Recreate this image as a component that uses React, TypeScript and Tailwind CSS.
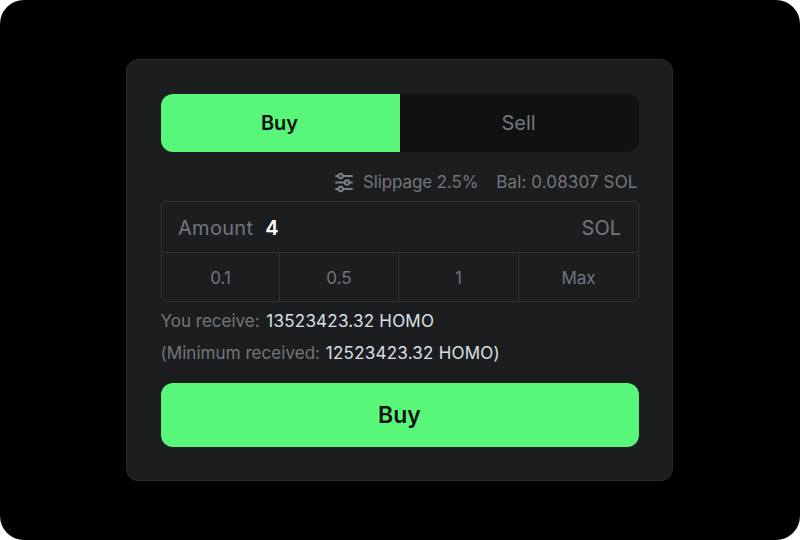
const amounts = ["0.1", "0.5", "1", "Max"];

function SlidersIcon() {
  return (
    <svg width="20" height="22" viewBox="0 0 20 22" fill="none" stroke="#7a8187" strokeWidth="1.9" strokeLinecap="round">
      <path d="M2 4H4M9 4H18M2 10.5H10.5M15.5 10.5H18M2 17H4M9 17H18" />
      <circle cx="6.6" cy="4" r="2.2" />
      <circle cx="13" cy="10.5" r="2.2" />
      <circle cx="6.6" cy="17" r="2.2" />
    </svg>
  );
}

export default function App() {
  return (
    <div className="h-[540px] w-[800px] bg-white font-['Inter',sans-serif]">
      <div className="flex h-full w-full items-center rounded-[24px] bg-black pl-[126px]">
        <main className="h-[422px] w-[547px] rounded-[12px] border border-[#28292c] bg-[#1c1d1f] pl-[33.5px] pr-[33.5px] pt-[34px]">
          <div className="flex h-[58px] overflow-hidden rounded-[12px] bg-[#111111] text-[20px]">
            <button className="w-[239px] bg-[#58f77a] pr-px font-semibold text-[#111111]">Buy</button>
            <button className="flex-1 pr-px text-[#70777d]">Sell</button>
          </div>
          <div className="mt-[17px] flex h-[26px] items-center justify-end pt-px text-[17px] text-[#70777d]">
            <SlidersIcon />
            <span className="ml-[9px] tracking-[-0.12px]">Slippage 2.5%</span>
            <span className="ml-[18px] mr-px tracking-[0.12px]">Bal: 0.08307 SOL</span>
          </div>
          <section className="mt-[6px] h-[101px] overflow-hidden rounded-[6px] border border-[#303136]">
            <div className="flex h-[50px] items-center px-[16.5px] pt-px text-[20px] text-[#70777d]">
              <span className="tracking-[0.3px]">Amount</span>
              <strong className="ml-[12px] font-semibold text-white">4</strong>
              <span className="ml-auto">SOL</span>
            </div>
            <div className="grid h-[50px] grid-cols-[118px_119px_120px_1fr] divide-x divide-[#303136] border-t border-[#303136] text-[17px] text-[#70777d]">
              {amounts.map((a) => <button key={a} className="pl-px pt-[2px]">{a}</button>)}
            </div>
          </section>
          <div className="mt-[3px] text-[17px] leading-[32px] text-[#70777d]">
            <p>You receive: <span className="ml-[2px] tracking-[0.23px] text-[#d8e1e8]">13523423.32 HOMO</span></p>
            <p><span className="tracking-[0.05px]">(Minimum received:</span> <span className="ml-px tracking-[0.23px] text-[#d8e1e8]">12523423.32 HOMO)</span></p>
          </div>
          <button className="mt-[14px] h-[64px] w-full rounded-[12px] bg-[#58f77a] text-[23px] font-semibold text-[#111111]">Buy</button>
        </main>
      </div>
    </div>
  );
}
